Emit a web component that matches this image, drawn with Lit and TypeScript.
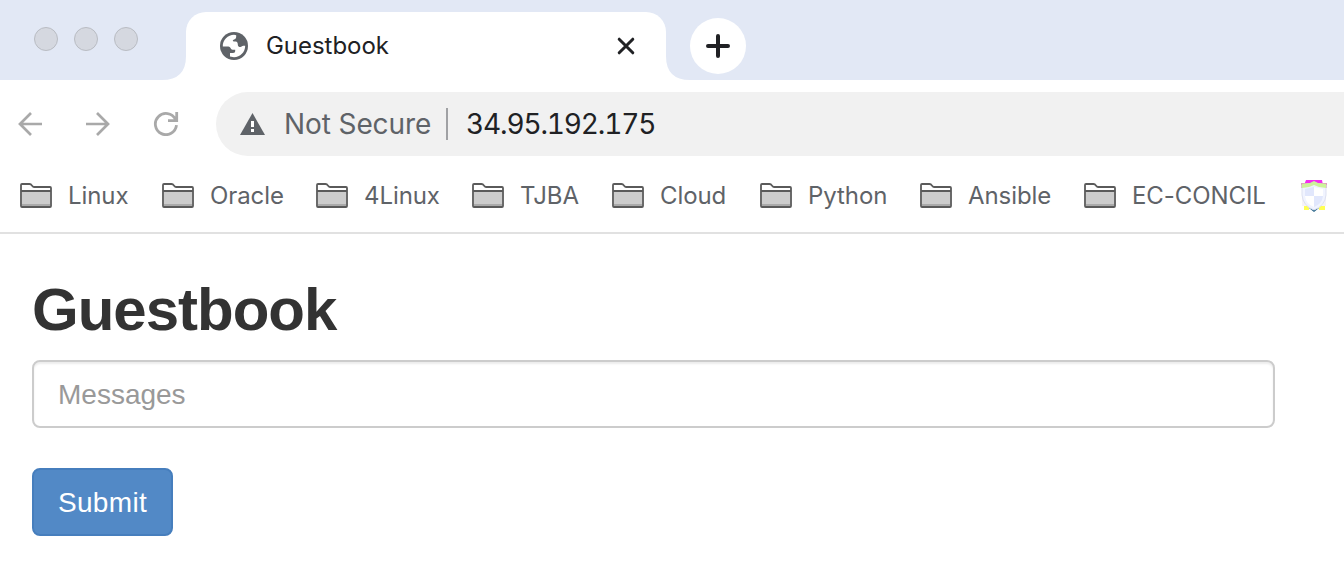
import { LitElement, html, css } from "lit";
import { customElement } from "lit/decorators.js";

const folders = ["Linux", "Oracle", "4Linux", "TJBA", "Cloud", "Python", "Ansible", "EC-CONCIL"];

const globe = html`<svg width="28" height="28" viewBox="0 0 28 28">
  <circle cx="14" cy="14" r="14" fill="#5f6368" />
  <path fill="#fff" d="M2.8 14.6C2.4 8 8 2.8 14 2.8L16.2 3.2V4.5C16.2 6.2 15.2 7.4 13.6 7.8C12.4 8.1 12.6 9.4 14 9.4H15.5C17.4 9.4 17.8 11.2 17.8 12.4C17.8 14.4 19 15 20.4 15C21.8 15 22.2 13.8 23.2 13.8H25.2C25.2 20.2 20.2 25.2 14 25.2L10 24.5V21H13C14.6 21 15.2 20.2 15.2 18.8V17.8H12.6C10.6 17.8 10.6 14.6 8.4 14.6Z" />
</svg>`;

const folder = html`<svg width="32" height="25" viewBox="0 0 32 25">
  <path d="M1 2Q1 1 2 1H9.5Q11 1 11.8 2.4Q12.6 4 14 4H30Q31 4 31 5V23Q31 24 30 24H2Q1 24 1 23Z" fill="#fff" />
  <path d="M2 8H30V21H2Z" fill="#ccc" /><path d="M2 21H30V23H2Z" fill="#aaa" />
  <path d="M1 2Q1 1 2 1H9.5Q11 1 11.8 2.4Q12.6 4 14 4H30Q31 4 31 5V23Q31 24 30 24H2Q1 24 1 23ZM1 8H31" fill="none" stroke="#5a5a5a" stroke-width="1.8" />
</svg>`;

const shield = html`<svg width="26" height="32" viewBox="0 0 26 32">
  <path d="M5 0H21L22 5H3Z" fill="#f32df0" />
  <path d="M0 3H26V8H0Z" fill="#dca2bd" />
  <path d="M1 8H25V26H1Z" fill="#f6f3f8" />
  <path d="M3 26H8V30H3ZM18 26H24V30H18Z" fill="#ffff55" />
  <path d="M8 28H18L13 32Z" fill="#236084" />
  <path d="M13 2L17 4L25 5V15Q24 26 13 30Q2 26 1 15V5L9 4Z" fill="#f1f4ff" stroke="#dde1f1" />
  <path d="M1 8V4L9 3L13 1L17 3L25 4V8L18 7L13 5L8 7Z" fill="#cdf39a" />
  <path d="M13 7L22 9V16H13ZM4 16H13V27Q5 24 4 16Z" fill="#fff" />
  <path d="M13 7L4 9V16H13ZM22 16H13V27Q21 24 22 16Z" fill="#e1e7fc" />
</svg>`;

@customElement("app-root")
export class AppRoot extends LitElement {
  static styles = css`
    :host { display: block; height: 586px; overflow: hidden; background: #fff; font-family: Inter, sans-serif; color: #202124; }
    * { box-sizing: border-box; }
    svg { display: block; flex: none; }
    .strip { height: 80px; background: #e2e8f5; display: flex; align-items: flex-start; }
    .lights { width: 162px; height: 80px; padding: 27px 0 0 34px; display: flex; gap: 16px; }
    .light { width: 24px; height: 24px; border-radius: 50%; background: #d5d8e0; border: 1px solid #b9bcc3; }
    .edge { margin-top: 56px; }
    .tab { width: 480px; height: 68px; margin-top: 12px; background: #fff; border-radius: 20px 20px 0 0; display: flex; align-items: center; padding: 0 30px 0 34px; }
    .tab-title { flex: 1; margin-left: 18px; font-size: 24px; line-height: 30px; letter-spacing: -0.04px; }
    .new { margin-top: 18px; width: 56px; height: 56px; border-radius: 50%; background: #fff; display: grid; place-items: center; }
    .toolbar { height: 88px; display: flex; align-items: center; padding-left: 18px; }
    .nav { display: flex; gap: 43px; width: 198px; }
    .omnibox { flex: 1; height: 64px; background: #f1f1f1; border-radius: 32px 0 0 32px; display: flex; align-items: center; padding-left: 24px; font-size: 28px; line-height: 36px; }
    .secure { width: 162px; margin-left: 19px; color: #5f6368; white-space: nowrap; letter-spacing: -0.1px; }
    .divider { width: 2px; height: 32px; background: #a0a1a4; margin-right: 18px; }
    .url { font-variant-numeric: tabular-nums; white-space: nowrap; letter-spacing: -1.15px; }
    .bookmarks { height: 66px; border-bottom: 2px solid #e1e1e1; display: grid; grid-template-columns: 142px 154px 156px 140px 148px 160px 164px 217px 26px; padding: 12px 0 0 20px; }
    .bookmark { display: flex; gap: 16px; height: 31px; align-items: center; color: #5f6368; font-size: 24px; line-height: 31px; white-space: nowrap; letter-spacing: -0.08px; }
    .page { padding: 43px 32px; font-family: "Liberation Sans", Arial, sans-serif; }
    h1 { margin: 0 0 17px; font-size: 60px; line-height: 66px; color: #333; letter-spacing: -1px; }
    .field { display: block; width: 1243px; height: 68px; border: 2px solid #ccc; border-radius: 8px; padding: 2px 24px 0; font: 28px "Liberation Sans", Arial, sans-serif; box-shadow: inset 0 2px 2px rgba(0, 0, 0, 0.075); background: #fff; outline: 0; }
    .field::placeholder { color: #999; opacity: 1; }
    .submit { display: block; margin-top: 40px; width: 141px; height: 68px; border: 2px solid #467ebd; border-radius: 8px; background: #5289c6; color: #fff; font: 28px "Liberation Sans", Arial, sans-serif; letter-spacing: 0.35px; padding: 2px 0 0; }
  `;

  render() {
    return html`
      <div class="strip">
        <div class="lights"><i class="light"></i><i class="light"></i><i class="light"></i></div>
        <svg class="edge" width="24" height="24"><path d="M24 0V24H0Q24 24 24 0" fill="#fff" /></svg>
        <div class="tab">
          ${globe}<span class="tab-title">Guestbook</span>
          <svg width="20" height="20" viewBox="0 0 20 20"><path d="M3.2 3.2L16.8 16.8M16.8 3.2L3.2 16.8" stroke="#202124" stroke-width="3" stroke-linecap="round" /></svg>
        </div>
        <svg class="edge" width="24" height="24"><path d="M0 0V24H24Q0 24 0 0" fill="#fff" /></svg>
        <div class="new"><svg width="24" height="24"><path d="M12 2V22M2 12H22" stroke="#202124" stroke-width="4" stroke-linecap="round" /></svg></div>
      </div>
      <div class="toolbar">
        <div class="nav">
          <svg width="24" height="24" fill="none" stroke="#a9a9a9" stroke-width="2.7"><path d="M24 12H2M13 1L2 12L13 23" /></svg>
          <svg width="25" height="24" fill="none" stroke="#a9a9a9" stroke-width="2.7"><path d="M1 12H23M12 1L23 12L12 23" /></svg>
          <svg width="26" height="24" viewBox="-1 0 26 24" fill="none" stroke="#a9a9a9" stroke-width="2.8"><path d="M21.4 7.2A10.6 10.6 0 1 0 22.5 13.2M22.7 0V8.6H14" /></svg>
        </div>
        <div class="omnibox">
          <svg width="25" height="22" viewBox="0 0 25 22"><path d="M12.5 0L25 22H0Z" fill="#5f6368" /><path d="M11 8H14V14H11ZM11 16H14V19H11Z" fill="#fff" /></svg>
          <span class="secure">Not Secure</span><i class="divider"></i><span class="url">34.95.192.175</span>
        </div>
      </div>
      <div class="bookmarks">
        ${folders.map((name) => html`<div class="bookmark">${folder}<span>${name}</span></div>`)}
        ${shield}
      </div>
      <main class="page">
        <h1>Guestbook</h1>
        <input class="field" placeholder="Messages" />
        <button class="submit">Submit</button>
      </main>
    `;
  }
}
